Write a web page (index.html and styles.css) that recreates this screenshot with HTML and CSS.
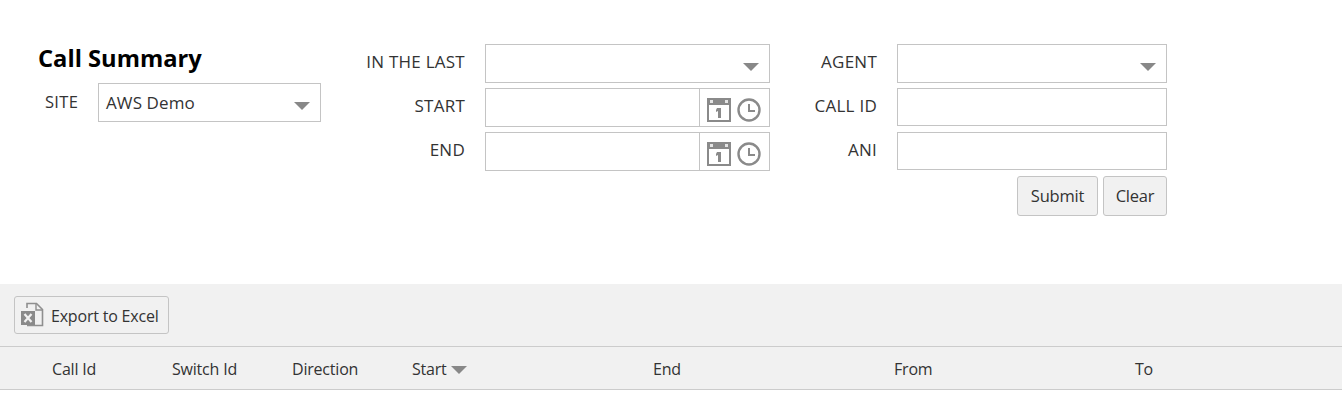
FILE: index.html
```html
<!DOCTYPE html>
<html lang="en">
<head>
    <meta charset="UTF-8">
    <meta name="viewport" content="width=device-width, initial-scale=1.0">
    <title>Call Summary</title>
    <link rel="stylesheet" href="styles.css">
</head>
<body>
    <div class="filters">
        <div class="site-col">
            <h1>Call Summary</h1>
            <div class="site-row">
                <label class="site-label">SITE</label>
                <div class="field select site-select">
                    <span class="value">AWS Demo</span>
                    <span class="arrow"></span>
                </div>
            </div>
        </div>

        <div class="time-col">
            <label>IN THE LAST</label>
            <div class="field select">
                <span class="arrow"></span>
            </div>
            <label>START</label>
            <div class="field date">
                <span class="value"></span>
                <span class="date-btns">
                    <svg class="cal" width="24" height="24" viewBox="0 0 24 24"><path fill="#8a8a8a" d="M0 0h24v24H0z"/><path fill="#fff" d="M2 7h20v15H2z"/><path fill="#e4e4e4" d="M3 2h3v3H3zM18 2h3v3h-3z"/><path fill="#8a8a8a" d="M10 10h4v10h-3v-7l-2 1v-2z"/></svg>
                    <svg class="clock" width="24" height="24" viewBox="0 0 24 24"><circle cx="12" cy="12" r="10.5" fill="none" stroke="#8a8a8a" stroke-width="2.4"/><path fill="none" stroke="#8a8a8a" stroke-width="2" d="M12 6v7h6"/></svg>
                </span>
            </div>
            <label>END</label>
            <div class="field date">
                <span class="value"></span>
                <span class="date-btns">
                    <svg class="cal" width="24" height="24" viewBox="0 0 24 24"><path fill="#8a8a8a" d="M0 0h24v24H0z"/><path fill="#fff" d="M2 7h20v15H2z"/><path fill="#e4e4e4" d="M3 2h3v3H3zM18 2h3v3h-3z"/><path fill="#8a8a8a" d="M10 10h4v10h-3v-7l-2 1v-2z"/></svg>
                    <svg class="clock" width="24" height="24" viewBox="0 0 24 24"><circle cx="12" cy="12" r="10.5" fill="none" stroke="#8a8a8a" stroke-width="2.4"/><path fill="none" stroke="#8a8a8a" stroke-width="2" d="M12 6v7h6"/></svg>
                </span>
            </div>
        </div>

        <div class="agent-col">
            <label>AGENT</label>
            <div class="field select">
                <span class="arrow"></span>
            </div>
            <label>CALL ID</label>
            <div class="field short"></div>
            <label>ANI</label>
            <div class="field short"></div>
            <div class="actions">
                <button class="submit">Submit</button>
                <button class="clear">Clear</button>
            </div>
        </div>
    </div>

    <div class="toolbar">
        <button class="export">
            <svg width="24" height="26" viewBox="0 0 24 26"><path fill="none" stroke="#8f8f8f" stroke-width="1.6" d="M7 6V1.5h9.500l6 6V23.500H7"/><path fill="none" stroke="#8f8f8f" stroke-width="1.400" d="M16 2v6h6"/><path fill="#8a8a8a" d="M1 9h14v14H1z"/><path fill="none" stroke="#f1f1f1" stroke-width="2.200" d="M4.500 12l7 8M11.500 12l-7 8"/></svg>
            <span>Export to Excel</span>
        </button>
    </div>

    <div class="grid-head">
        <div>Call Id</div>
        <div>Switch Id</div>
        <div>Direction</div>
        <div class="sorted">Start<span class="arrow"></span></div>
        <div>End</div>
        <div>From</div>
        <div>To</div>
    </div>
</body>
</html>
```

FILE: styles.css
```css
body {
    margin: 0;
    font-family: "Open Sans", "Noto Sans", sans-serif;
    font-size: 16px;
    letter-spacing: -0.2px;
    color: #333;
    background: #fff;
}
.filters {
    display: flex;
    height: 284px;
    box-sizing: border-box;
    padding-top: 43px;
}
h1 {
    margin: 0;
    font-size: 23.7px;
    line-height: 30px;
    font-weight: 700;
    letter-spacing: 0;
    color: #000;
}
.site-col {
    width: 321px;
    padding-left: 38px;
    box-sizing: border-box;
}
.site-row {
    display: flex;
    align-items: flex-start;
    margin-top: 10px;
}
.site-label {
    margin-left: 7px;
    width: 53px;
    line-height: 37px;
    font-size: 16.5px;
    letter-spacing: 0.3px;
}
.site-select {
    width: 223px;
}
.field {
    display: flex;
    align-items: center;
    box-sizing: border-box;
    height: 39px;
    border: 1px solid #c4c4c4;
    background: #fff;
}
.field .value {
    flex: 1;
    padding-left: 7px;
    line-height: 38px;
    align-self: flex-start;
    font-size: 17px;
    letter-spacing: 0.1px;
}
.select {
    position: relative;
}
.arrow {
    display: inline-block;
    width: 0;
    height: 0;
    border-left: 8px solid transparent;
    border-right: 8px solid transparent;
    border-top: 8px solid #888;
}
.select .arrow {
    position: absolute;
    right: 10px;
    top: 18px;
}
.sorted .arrow {
    margin-left: 4px;
    vertical-align: 1px;
}
.time-col {
    display: grid;
    grid-template-columns: 144px 285px;
    grid-auto-rows: 39px;
    row-gap: 5px;
    column-gap: 20px;
    align-content: start;
    margin-top: 1px;
}
.time-col label,
.agent-col label {
    text-align: right;
    line-height: 36px;
    font-size: 17px;
    letter-spacing: 0.25px;
}
.date-btns {
    display: flex;
    align-items: center;
    gap: 6px;
    height: 100%;
    width: 70px;
    box-sizing: border-box;
    padding-left: 7px;
    border-left: 1px solid #c4c4c4;
}
.date-btns svg {
    margin-top: 4px;
}
.agent-col {
    display: grid;
    grid-template-columns: 107px 270px;
    grid-auto-rows: 39px;
    row-gap: 5px;
    column-gap: 20px;
    align-content: start;
    margin-top: 1px;
}
.short {
    height: 38px;
}
.actions {
    grid-column: 2;
    display: flex;
    justify-content: flex-end;
    gap: 5px;
    height: 40px;
}
button {
    font-family: inherit;
    font-size: 16.5px;
    letter-spacing: -0.2px;
    color: #333;
    background: #f1f1f1;
    border: 1px solid #c4c4c4;
    border-radius: 3px;
    padding: 0 0 2px;
}
.submit {
    width: 81px;
}
.clear {
    width: 64px;
}
.toolbar {
    height: 63px;
    box-sizing: border-box;
    padding: 12px 14px;
    background: #f1f1f1;
    border-bottom: 1px solid #ccc;
}
.export {
    display: flex;
    align-items: center;
    gap: 7px;
    width: 155px;
    height: 38px;
    padding: 0 0 0 5px;
    font-size: 16px;
}
.export span {
    margin-top: 2px;
}
.grid-head {
    display: grid;
    grid-template-columns: 120px 120px 120px 241px 241px 241px 1fr;
    align-items: center;
    height: 43px;
    box-sizing: border-box;
    padding: 2px 0 0 52px;
    background: #f1f1f1;
    border-bottom: 1px solid #ccc;
}
```
